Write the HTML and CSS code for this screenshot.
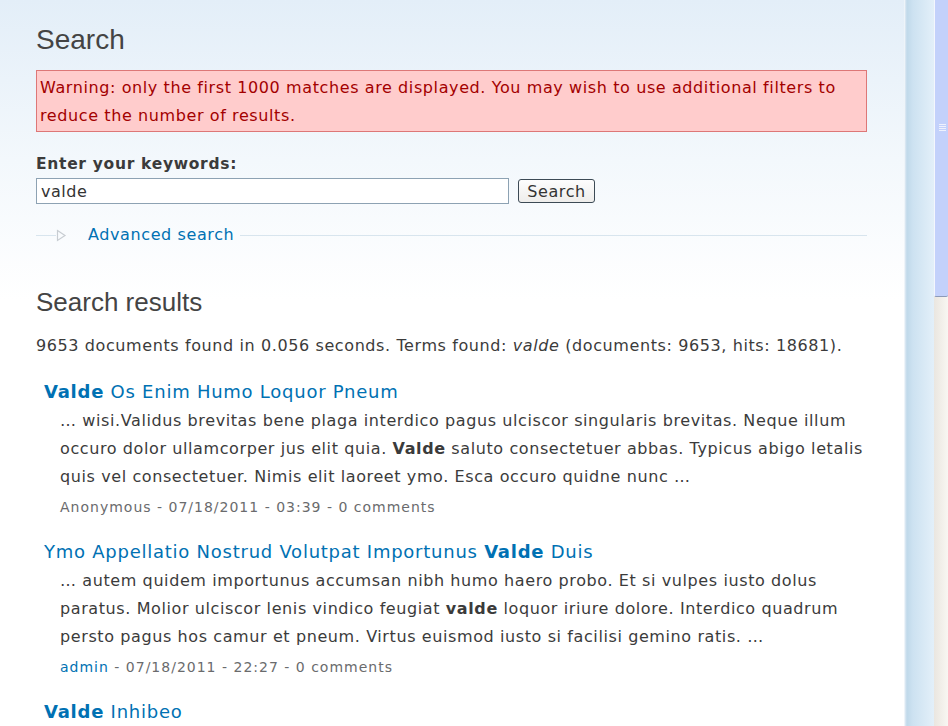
FILE: index.html
```html
<!DOCTYPE html>
<html lang="en">
<head>
    <meta charset="UTF-8">
    <title>Search</title>
    <link rel="stylesheet" href="styles.css">
</head>
<body>
    <div class="frame">
        <div class="page">
            <h1 class="page-title">Search</h1>

            <div class="messages warning">
                Warning: only the first 1000 matches are displayed. You may wish to use additional filters to reduce the number of results.
            </div>

            <form class="search-form">
                <label class="form-label" for="keys">Enter your keywords:</label>
                <div class="form-row">
                    <input type="text" id="keys" class="form-text" value="valde">
                    <button type="button" class="form-submit">Search</button>
                </div>

                <fieldset class="collapsible">
                    <legend>
                        <span class="legend-icon">
                            <svg width="11" height="13" viewBox="0 0 11 13"><path d="M1.5 1.5 L9 6.5 L1.5 11.5 Z" fill="none" stroke="#c8cdd2" stroke-width="1.2"/></svg>
                        </span>
                        <a href="#">Advanced search</a>
                    </legend>
                </fieldset>
            </form>

            <h2 class="results-title">Search results</h2>
            <p class="results-summary">9653 documents found in 0.056 seconds. Terms found: <em>valde</em> (documents: 9653, hits: 18681).</p>

            <ol class="search-results">
                <li>
                    <h3 class="title"><a href="#"><strong>Valde</strong> Os Enim Humo Loquor Pneum</a></h3>
                    <div class="snippet">
                        <p>… wisi.Validus brevitas bene plaga interdico pagus ulciscor singularis brevitas. Neque illum occuro dolor ullamcorper jus elit quia. <strong>Valde</strong> saluto consectetuer abbas. Typicus abigo letalis quis vel consectetuer. Nimis elit laoreet ymo. Esca occuro quidne nunc …</p>
                        <p class="info">Anonymous - 07/18/2011 - 03:39 - 0 comments</p>
                    </div>
                </li>
                <li>
                    <h3 class="title"><a href="#">Ymo Appellatio Nostrud Volutpat Importunus <strong>Valde</strong> Duis</a></h3>
                    <div class="snippet">
                        <p>… autem quidem importunus accumsan nibh humo haero probo. Et si vulpes iusto dolus paratus. Molior ulciscor lenis vindico feugiat <strong>valde</strong> loquor iriure dolore. Interdico quadrum persto pagus hos camur et pneum. Virtus euismod iusto si facilisi gemino ratis. …</p>
                        <p class="info"><a href="#">admin</a> - 07/18/2011 - 22:27 - 0 comments</p>
                    </div>
                </li>
                <li>
                    <h3 class="title"><a href="#"><strong>Valde</strong> Inhibeo</a></h3>
                    <div class="snippet">
                        <p>… nibh humo haero probo. Et si vulpes iusto dolus paratus. Molior ulciscor lenis vindico feugiat.</p>
                    </div>
                </li>
            </ol>
        </div>

        <div class="side-strip"></div>

        <div class="scrollbar">
            <div class="scroll-thumb">
                <span class="grip"></span>
            </div>
        </div>
    </div>
</body>
</html>
```

FILE: styles.css
```css
html, body {
    margin: 0;
    padding: 0;
    height: 100%;
    overflow: hidden;
}
body {
    font-family: 'DejaVu Sans', Verdana, sans-serif;
    color: #3b3b3b;
    background-color: #fff;
}
a {
    color: #0071b3;
    text-decoration: none;
}
.frame {
    display: flex;
    height: 100vh;
}
.page {
    width: 904px;
    flex: none;
    box-sizing: border-box;
    padding: 22px 37px 0 36px;
    background: linear-gradient(to bottom, #e3eef8 0, #f3f8fc 160px, #fff 300px);
}
.page-title {
    font-family: 'Liberation Sans', Arial, sans-serif;
    font-weight: normal;
    font-size: 28px;
    color: #444;
    margin: 0 0 12px 0;
    line-height: 36px;
}
.messages {
    border: 1px solid #dd7777;
    background-color: #ffcccc;
    color: #a30000;
    font-size: 16px;
    line-height: 28px;
    padding: 3px 0 1px 3px;
    letter-spacing: 0.6px;
}
.search-form {
    margin-top: 19px;
}
.form-label {
    display: block;
    font-weight: bold;
    font-size: 15.5px;
    line-height: 27px;
    color: #3b3b3b;
    letter-spacing: 0.7px;
}
.form-row {
    display: flex;
    align-items: center;
    gap: 9px;
    height: 26px;
}
.form-text {
    width: 473px;
    height: 26px;
    box-sizing: border-box;
    border: 1px solid #8da2b3;
    padding: 0 4px;
    font-family: 'DejaVu Sans', Verdana, sans-serif;
    font-size: 16px;
    letter-spacing: 0.5px;
    color: #333;
    background: #fff;
}
.form-submit {
    height: 24px;
    width: 77px;
    border: 1px solid #3c4a55;
    border-radius: 3px;
    background: linear-gradient(to bottom, #fdfdfd, #eeedeb);
    font-family: 'DejaVu Sans', Verdana, sans-serif;
    font-size: 16px;
    letter-spacing: 0.6px;
    color: #333;
    padding: 0;
}
.collapsible {
    border: 0;
    border-top: 1px solid #d8e5ee;
    margin: 21px 0 0 0;
    padding: 0;
    min-width: 0;
}
.collapsible legend {
    display: flex;
    align-items: center;
    padding: 0 6px 0 0;
    margin-left: 20px;
    font-size: 16px;
    letter-spacing: 0.6px;
    line-height: 20px;
}
.legend-icon {
    display: inline-flex;
    width: 32px;
}
.results-title {
    font-family: 'Liberation Sans', Arial, sans-serif;
    font-weight: normal;
    font-size: 26px;
    color: #444;
    margin: 40px 0 0 0;
    line-height: 34px;
}
.results-summary {
    font-size: 16px;
    line-height: 28px;
    margin: 13px 0 0 0;
    letter-spacing: 0.6px;
}
.search-results {
    list-style: none;
    margin: 17px 0 0 0;
    padding: 0;
}
.search-results li {
    margin-bottom: 15px;
}
.search-results .title {
    font-weight: normal;
    font-size: 18px;
    letter-spacing: 0.75px;
    line-height: 30px;
    margin: 0 0 0 8px;
}
.snippet {
    padding-left: 24px;
}
.snippet p {
    margin: 0;
    font-size: 16px;
    line-height: 28px;
    letter-spacing: 0.6px;
}
.snippet .info {
    font-size: 14px;
    color: #6a6b6d;
    line-height: 30px;
    margin-top: 1px;
    letter-spacing: 1px;
}
.side-strip {
    width: 29px;
    flex: none;
    background: linear-gradient(to right, #dfeaf4 0, #c0d9ea 2px, #cde2f1 8px, #e2eff9 28px);
    border-left: 1px solid #eef4f9;
}
.scrollbar {
    flex: 1;
    background: linear-gradient(to right, #eae6e0, #f8f6f2);
    position: relative;
}
.scroll-thumb {
    position: absolute;
    top: 0;
    left: 0;
    right: 0;
    height: 297px;
    box-sizing: border-box;
    background: #c3d1fb;
    border-left: 1px solid #f4f6fd;
    border-bottom: 1px solid #8c9ab8;
    border-radius: 0 0 2px 2px;
}
.grip {
    position: absolute;
    top: 124px;
    left: 4px;
    width: 7px;
    height: 7px;
    background: repeating-linear-gradient(to bottom, #eef2fd 0, #eef2fd 1px, transparent 1px, transparent 2px);
}
```
